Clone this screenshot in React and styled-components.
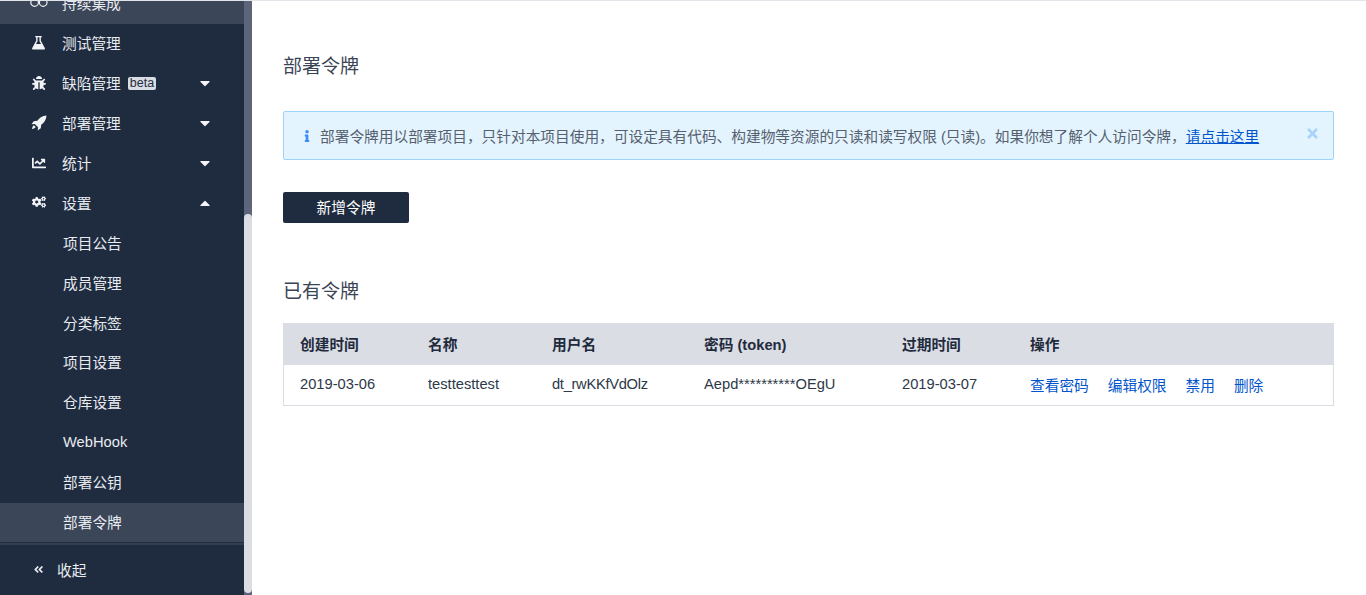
import React from 'react';
import styled, { createGlobalStyle } from 'styled-components';
import { FaBug, FaChartLine, FaCogs, FaInfo, FaTimes, FaCaretDown, FaCaretUp, FaAngleDoubleLeft } from 'react-icons/fa';

const GlobalStyle = createGlobalStyle`
    html, body { margin: 0; padding: 0; height: 100%; overflow: hidden; background: #fff; }
    body { font-family: "Liberation Sans", "Noto Sans CJK SC", sans-serif; font-size: 14.7px; color: #1f2b3d; }
    * { box-sizing: border-box; }
`;

const Page = styled.div`
    display: flex;
    height: 595px;
    border-top: 1px solid #e1e4e8;
`;

const Sidebar = styled.aside`
    width: 252px;
    flex: none;
    display: flex;
`;

const SideColumn = styled.div`
    width: 244px;
    display: flex;
    flex-direction: column;
    background: #1f2b3f;
`;

const Menu = styled.div`
    flex: 1;
    overflow: hidden;
`;

const MenuInner = styled.div`
    margin-top: -17px;
`;

const Row = styled.div`
    height: 39.9px;
    display: flex;
    align-items: center;
    padding-left: ${p => (p.$sub ? '63px' : '31px')};
    padding-right: 31px;
    padding-bottom: 2px;
    color: #e8ebf0;
    background: ${p => (p.$active ? '#3b4659' : 'transparent')};
`;

const RowIcon = styled.span`
    width: 15px;
    margin-right: 16px;
    display: flex;
    justify-content: center;
    font-size: 14px;
    color: #f2f4f7;
    svg { flex: none; }
`;

const Beta = styled.span`
    margin: 2px 0 0 7px;
    height: 13px;
    padding: 0 2px;
    line-height: 13px;
    font-size: 12.5px;
    border-radius: 2px;
    background: #d9dde4;
    color: #1f2b3f;
`;

const Caret = styled.span`
    margin: 1px 0 0 auto;
    display: flex;
    font-size: 16px;
    color: #f2f4f7;
`;

const Collapse = styled.div`
    height: 52px;
    border-top: 2px solid #323e52;
    display: flex;
    align-items: center;
    padding-left: 33px;
    padding-bottom: 2px;
    color: #e8ebf0;
    gap: 13px;
`;

const Track = styled.div`
    width: 8px;
    background: #5c6579;
    padding-top: 213px;
`;

const Thumb = styled.div`
    width: 8px;
    height: 379px;
    border-radius: 4px;
    background: #dadde4;
`;

const Main = styled.main`
    flex: 1;
    padding: 54px 32px 0 31px;
`;

const Heading = styled.h2`
    margin: 0;
    font-size: 19px;
    font-weight: 400;
    line-height: 24px;
    color: #3a4454;
`;

const Notice = styled.div`
    margin-top: 32px;
    height: 49px;
    display: flex;
    align-items: center;
    padding: 0 13px 0 17px;
    background: #e3f4ff;
    border: 1px solid #9dd3fb;
    border-radius: 2px;
    color: #56606e;
`;

const NoticeIcon = styled.span`
    width: 19px;
    display: flex;
    font-size: 12px;
    color: #3d8cf5;
`;

const Link = styled.a`
    color: #0055cc;
    cursor: pointer;
    text-decoration: ${p => (p.$underline ? 'underline' : 'none')};
`;

const Close = styled.span`
    margin-left: auto;
    padding-bottom: 4px;
    display: flex;
    font-size: 15px;
    color: #a9d3fb;
`;

const PrimaryButton = styled.button`
    display: block;
    margin-top: 32px;
    width: 126px;
    height: 31px;
    padding: 0 0 2px;
    border: 0;
    border-radius: 2px;
    background: #1f2b3f;
    color: #fff;
    font: inherit;
`;

const TableHeading = styled(Heading)`
    margin-top: 57px;
`;

const Table = styled.div`
    margin-top: 19px;
    border: 1px solid #dadde4;
    border-top: 0;
`;

const TableRow = styled.div`
    display: grid;
    grid-template-columns: 128px 124px 152px 198px 128px 1fr;
    align-items: center;
    height: ${p => (p.$head ? '42px' : '40px')};
    margin: ${p => (p.$head ? '0 -1px' : '0')};
    padding-left: ${p => (p.$head ? '17px' : '16px')};
    padding-bottom: 2px;
    background: ${p => (p.$head ? '#dadde4' : '#fff')};
    font-weight: ${p => (p.$head ? 700 : 400)};
    color: ${p => (p.$head ? '#1f2b3d' : '#2d3848')};
`;

const Username = styled.span`
    letter-spacing: -0.3px;
`;

const Actions = styled.div`
    display: flex;
    gap: 19px;
`;

const InfinityIcon = () => (
    <svg width="18" height="9" viewBox="0 0 18 9" fill="none" stroke="currentColor" strokeWidth="1.2">
        <circle cx="4.6" cy="4.5" r="3.8" />
        <circle cx="13.2" cy="4.5" r="3.8" />
    </svg>
);

const FlaskIcon = () => (
    <svg width="15" height="15" viewBox="0 0 16 16" fill="currentColor" fillRule="evenodd">
        <path d="M4.500 1h7v1.400h-1v3.800l4.200 7.600c.5.9 0 1.700-.9 1.700H2.200c-.9 0-1.400-.8-.9-1.700l4.200-7.600V2.400h-1zM7 2.400v4.200L5.300 9.700h5.400L9 6.600V2.400z" />
    </svg>
);

const RocketIcon = () => (
    <svg width="16" height="16" viewBox="0 0 16 16" fill="currentColor">
        <path d="M15.500.500C11.500.700 8.500 2.600 6.300 5.800L2.700 6.200.500 9.300l3.300-.3 3.200 3.200-.3 3.300 3.100-2.200.4-3.600c3.200-2.200 5.100-5.200 5.300-9.200z" />
        <path d="M2.900 10.300c-1 .6-1.700 1.900-2 3.800 1.900-.3 3.200-1 3.800-2z" />
    </svg>
);

const mainRows = [
    { label: '持续集成', active: true, icon: <InfinityIcon /> },
    { label: '测试管理', icon: <FlaskIcon /> },
    { label: '缺陷管理', icon: <FaBug />, beta: true, caret: 'down' },
    { label: '部署管理', icon: <RocketIcon />, caret: 'down' },
    { label: '统计', icon: <FaChartLine />, caret: 'down' },
    { label: '设置', icon: <FaCogs />, caret: 'up' },
];

const subRows = ['项目公告', '成员管理', '分类标签', '项目设置', '仓库设置', 'WebHook', '部署公钥', '部署令牌'];

const App = () => {
    return (
        <>
            <GlobalStyle />
            <Page>
                <Sidebar>
                    <SideColumn>
                        <Menu>
                            <MenuInner>
                                {mainRows.map(r => (
                                    <Row key={r.label} $active={r.active}>
                                        <RowIcon>{r.icon}</RowIcon>
                                        {r.label}
                                        {r.beta && <Beta>beta</Beta>}
                                        {r.caret && <Caret>{r.caret === 'up' ? <FaCaretUp /> : <FaCaretDown />}</Caret>}
                                    </Row>
                                ))}
                                {subRows.map(s => (
                                    <Row key={s} $sub $active={s === '部署令牌'}>{s}</Row>
                                ))}
                            </MenuInner>
                        </Menu>
                        <Collapse>
                            <FaAngleDoubleLeft size={11} />
                            收起
                        </Collapse>
                    </SideColumn>
                    <Track><Thumb /></Track>
                </Sidebar>
                <Main>
                    <Heading>部署令牌</Heading>
                    <Notice>
                        <NoticeIcon><FaInfo /></NoticeIcon>
                        <span>部署令牌用以部署项目，只针对本项目使用，可设定具有代码、构建物等资源的只读和读写权限 (只读)。如果你想了解个人访问令牌，<Link $underline>请点击这里</Link></span>
                        <Close><FaTimes /></Close>
                    </Notice>
                    <PrimaryButton>新增令牌</PrimaryButton>
                    <TableHeading>已有令牌</TableHeading>
                    <Table>
                        <TableRow $head>
                            <span>创建时间</span>
                            <span>名称</span>
                            <span>用户名</span>
                            <span>密码 (token)</span>
                            <span>过期时间</span>
                            <span>操作</span>
                        </TableRow>
                        <TableRow>
                            <span>2019-03-06</span>
                            <span>testtesttest</span>
                            <Username>dt_rwKKfVdOlz</Username>
                            <span>Aepd**********OEgU</span>
                            <span>2019-03-07</span>
                            <Actions>
                                <Link>查看密码</Link>
                                <Link>编辑权限</Link>
                                <Link>禁用</Link>
                                <Link>删除</Link>
                            </Actions>
                        </TableRow>
                    </Table>
                </Main>
            </Page>
        </>
    );
};

export default App;
